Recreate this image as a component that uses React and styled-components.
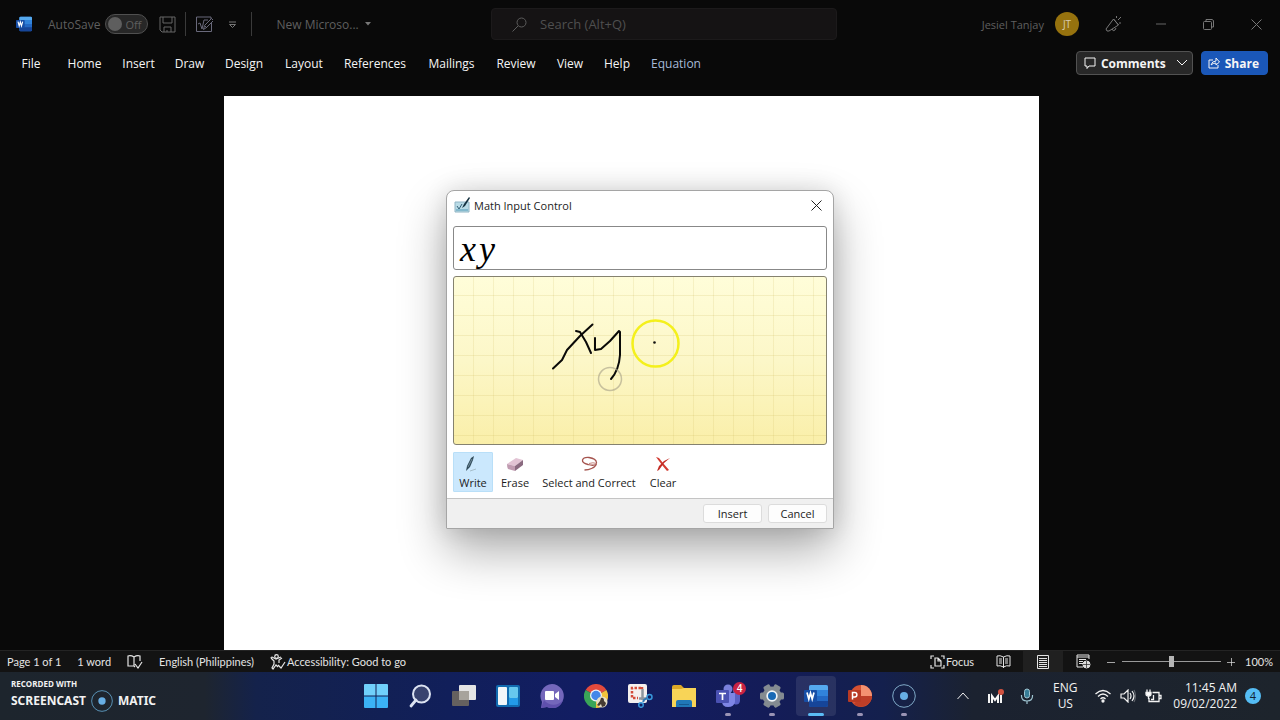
import React from "react";
import styled, { createGlobalStyle } from "styled-components";

const GlobalStyle = createGlobalStyle`
  *, *::before, *::after { box-sizing: border-box; }
  body { margin: 0; background: #090909; }
  body, button, input { font-family: "Open Sans", "Noto Sans", sans-serif; }
  button { margin: 0; padding: 0; border: 0; background: none; color: inherit; cursor: pointer; }
  svg { display: block; flex: none; }
`;

/* ---------- window ---------- */

const Screen = styled.div`
  position: relative;
  display: flex;
  flex-direction: column;
  min-height: 100vh;
  background: #090909;
  overflow: hidden;
`;

const TitleBar = styled.header`
  display: grid;
  grid-template-columns: minmax(0, 491fr) 346px minmax(0, 443fr);
  align-items: center;
  height: 48px;
  color: #5f5f5f;
  font-size: 12px;
`;

const QuickAccess = styled.div`
  display: flex;
  align-items: center;
  padding-left: 16px;
`;

const AutoSave = styled.label`
  display: flex;
  align-items: center;
  gap: 5px;
  margin: 0 10px 0 16px;
`;

const ToggleTrack = styled.span`
  display: flex;
  align-items: center;
  width: 43px;
  height: 20px;
  padding: 0 6px 0 2px;
  border: 1px solid #505050;
  border-radius: 10px;
  background: #272727;
  justify-content: space-between;
  font-size: 11px;
`;

const Toggle = styled.input`
  appearance: none;
  width: 14px;
  height: 14px;
  margin: 0;
  border-radius: 50%;
  background: #5e5e5e;
`;

const Divider = styled.span`
  width: 1px;
  height: 24px;
  margin: 0 ${(p) => p.$gap || 0}px;
  background: #3a3a3a;
`;

const IconButton = styled.button`
  display: flex;
  align-items: center;
  justify-content: center;
  width: ${(p) => p.$width || 18}px;
  height: 24px;
`;

const DocumentTitle = styled.button`
  display: flex;
  align-items: center;
  gap: 6px;
  margin-left: 24px;
  font-size: 12px;
`;

const SearchBox = styled.label`
  display: flex;
  align-items: center;
  gap: 13px;
  height: 32px;
  padding: 0 20px;
  border: 1px solid #1c1a1b;
  border-radius: 4px;
  background: #151314;
`;

const SearchInput = styled.input`
  flex: 1;
  min-width: 0;
  padding: 0;
  border: 0;
  outline: 0;
  background: transparent;
  color: #595959;
  font-size: 13px;
  &::placeholder { color: #4f4f4f; opacity: 1; }
`;

const WindowTools = styled.div`
  display: flex;
  align-items: center;
  justify-content: flex-end;
  font-size: 11px;
`;

const Avatar = styled.span`
  display: flex;
  align-items: center;
  justify-content: center;
  width: 24px;
  height: 24px;
  margin: 0 11px 0 11px;
  border-radius: 50%;
  background: #96720e;
  color: #d8cdb0;
  font-size: 10px;
`;

/* ---------- ribbon ---------- */

const Ribbon = styled.div`
  display: flex;
  align-items: center;
  justify-content: space-between;
  height: 32px;
  padding: 0 12px 2px 10px;
`;

const Tabs = styled.nav`
  display: flex;
`;

const Tab = styled.button`
  width: ${(p) => p.$width}px;
  height: 24px;
  color: ${(p) => (p.$accent ? "#a6bad8" : "#f5f5f5")};
  font-size: 12px;
  white-space: nowrap;
  text-align: center;
`;

const RibbonActions = styled.div`
  display: flex;
  gap: 8px;
`;

const ActionButton = styled.button`
  display: flex;
  align-items: center;
  gap: 5px;
  height: 24px;
  padding: 0 ${(p) => (p.$primary ? 8 : 4)}px 0 ${(p) => (p.$primary ? 6 : 7)}px;
  border: 1px solid ${(p) => (p.$primary ? "#1b58b8" : "#525252")};
  border-radius: 4px;
  background: ${(p) => (p.$primary ? "#1a57b8" : "#282828")};
  color: #f5f5f5;
  font-size: 12px;
  font-weight: 700;
  & > svg:last-child:not(:first-child) { margin-left: 5px; }
`;

/* ---------- document ---------- */

const Workspace = styled.main`
  display: flex;
  flex: 1;
  justify-content: center;
  padding: 16px 17px 0 0;
`;

const Page = styled.section`
  width: 815px;
  background: #fff;
`;

/* ---------- dialog ---------- */

const Dialog = styled.section`
  position: absolute;
  top: 190px;
  left: 50%;
  transform: translateX(-50%);
  width: 388px;
  border: 1px solid #a5a5a5;
  border-radius: 8px 8px 1px 1px;
  background: #fff;
  color: #1c1c1c;
  box-shadow: 0 22px 48px rgba(0, 0, 0, 0.32), 0 0 24px rgba(0, 0, 0, 0.12);
  font-size: 11px;
`;

const DialogHeader = styled.div`
  display: flex;
  align-items: center;
  gap: 3px;
  height: 29px;
  padding: 0 8px 0 7px;
`;

const DialogTitle = styled.h1`
  flex: 1;
  margin: 0;
  font-size: 11px;
  font-weight: 400;
`;

const DialogBody = styled.div`
  display: flex;
  flex-direction: column;
  gap: 6px;
  padding: 6px;
`;

const Preview = styled.output`
  display: flex;
  align-items: center;
  gap: 3px;
  height: 44px;
  padding: 2px 6px 0;
  border: 1px solid #888;
  border-radius: 3px;
  color: #000;
  font-family: "Liberation Serif", serif;
  font-size: 36px;
  font-style: italic;
  line-height: 40px;
`;

const InkArea = styled.div`
  height: 169px;
  border: 1px solid #85826f;
  border-radius: 3px;
  background:
    repeating-linear-gradient(90deg, transparent 0 19px, rgba(205, 185, 95, 0.18) 19px 20px),
    repeating-linear-gradient(180deg, transparent 0 18px, rgba(205, 185, 95, 0.2) 18px 19px, transparent 19px 20px),
    linear-gradient(#fffdd9, #fcf7c8 50%, #faefa9);
`;

const Tools = styled.div`
  display: flex;
  gap: 4px;
  margin-top: 1px;
`;

const Tool = styled.button`
  display: flex;
  flex-direction: column;
  align-items: center;
  gap: 3px;
  width: ${(p) => p.$width}px;
  height: 40px;
  padding-top: 3px;
  border: 1px solid ${(p) => (p.$active ? "#b9dff8" : "transparent")};
  border-radius: 1px;
  background: ${(p) => (p.$active ? "#cbe8fd" : "transparent")};
  font-size: 11px;
  line-height: 16px;
  white-space: nowrap;
`;

const DialogFooter = styled.div`
  display: flex;
  justify-content: flex-end;
  gap: 6px;
  padding: 5px 6px;
  border-top: 1px solid #c4c4c4;
  background: #f0f0f0;
`;

const FooterButton = styled.button`
  width: 59px;
  height: 19px;
  border: 1px solid #dcdcdc;
  border-radius: 3px;
  background: #fdfdfd;
  font-size: 11px;
  line-height: 16px;
`;

/* ---------- status bar ---------- */

const StatusBar = styled.footer`
  display: flex;
  align-items: center;
  justify-content: space-between;
  height: 22px;
  padding: 0 7px;
  border-top: 1px solid #242424;
  background: #131313;
  color: #e4e4e4;
  font-family: "Lato", "Open Sans", sans-serif;
  font-size: 11px;
  line-height: 16px;
  white-space: nowrap;
`;

const StatusGroup = styled.div`
  display: flex;
  align-items: center;
  gap: ${(p) => p.$gap || 0}px;
`;

const StatusButton = styled.button`
  display: flex;
  align-items: center;
  justify-content: center;
  gap: 1px;
  min-width: ${(p) => p.$width || 0}px;
  height: 21px;
  background: ${(p) => (p.$active ? "#202020" : "transparent")};
  font-family: inherit;
  font-size: 11px;
`;

const ZoomSlider = styled.input`
  appearance: none;
  width: 99px;
  height: 12px;
  margin: 0 6px 0 3px;
  background: linear-gradient(#9a9a9a, #9a9a9a) center / 100% 1px no-repeat;
  &::-webkit-slider-thumb {
    appearance: none;
    width: 5px;
    height: 11px;
    background: #b5b5b5;
  }
`;

const ZoomLevel = styled.span`
  min-width: 27px;
  margin-left: 10px;
`;

/* ---------- taskbar ---------- */

const Taskbar = styled.div`
  display: grid;
  grid-template-columns: minmax(0, 1fr) auto minmax(0, 1fr);
  align-items: center;
  height: 48px;
  background: linear-gradient(90deg, #1d252d 0, #1e252f 16%, #14224b 20%, #111f5a 35%, #121d62 45%, #141c58 60%, #14204d 69%, #1b2230 76%, #1d242c 100%);
  color: #f2f2f2;
  white-space: nowrap;
`;

const Watermark = styled.div`
  padding-left: 11px;
  font-weight: 700;
`;

const WatermarkNote = styled.div`
  font-size: 8px;
  line-height: 10px;
`;

const WatermarkBrand = styled.div`
  display: flex;
  align-items: center;
  gap: 5px;
  font-family: "Noto Sans", sans-serif;
  font-size: 12px;
  line-height: 24px;
`;

const Apps = styled.div`
  display: flex;
  gap: 4px;
`;

const AppButton = styled.button`
  position: relative;
  display: flex;
  align-items: center;
  justify-content: center;
  width: 40px;
  height: 40px;
  border-radius: 4px;
  background: ${(p) => (p.$active ? "rgba(255, 255, 255, 0.09)" : "transparent")};
  &::after {
    content: "";
    position: absolute;
    bottom: 0;
    left: 50%;
    width: ${(p) => (p.$active ? 16 : p.$open ? 6 : 0)}px;
    height: 3px;
    margin-left: ${(p) => (p.$active ? -8 : -3)}px;
    border-radius: 2px;
    background: ${(p) => (p.$active ? "#5bbcf5" : "#9a94b5")};
  }
`;

const Count = styled.span`
  position: absolute;
  top: 6px;
  right: 2px;
  width: 13px;
  height: 13px;
  border-radius: 50%;
  background: #c92343;
  color: #fff;
  font-size: 10px;
  font-weight: 600;
  line-height: 13px;
  text-align: center;
`;

const Tray = styled.div`
  display: flex;
  align-items: center;
  justify-content: flex-end;
  padding-right: 19px;
  font-size: 12px;
  line-height: 16px;
`;

const Language = styled.button`
  width: 44px;
  font-size: 12px;
  line-height: 16px;
  text-align: center;
`;

const Clock = styled.time`
  margin: 0 8px 0 4px;
  text-align: right;
`;

const Notices = styled.button`
  width: 16px;
  height: 16px;
  border-radius: 50%;
  background: #55bdf5;
  color: #123;
  font-size: 11px;
  line-height: 16px;
`;

/* ---------- drawings ---------- */

const Svg = ({ w = 16, h = w, box, children, ...rest }) => (
  <svg width={w} height={h} viewBox={box || `0 0 ${w} ${h}`} fill="none" stroke="currentColor" aria-hidden="true" {...rest}>
    {children}
  </svg>
);

const WordLogo = ({ size = 24 }) => (
  <Svg w={size} box="0 0 24 24" stroke="none">
    <rect x="5" y="1" width="19" height="22" rx="2" fill="#2368c4" />
    <path d="M5 6V3q0-2 2-2h15q2 0 2 2v3z" fill="#55a9ee" />
    <path d="M5 6h19v6H5z" fill="#3183db" />
    <path d="M5 17h19v4q0 2-2 2H7q-2 0-2-2z" fill="#164599" />
    <rect x="0" y="6" width="13" height="12" rx="1" fill="#174ea6" />
    <path d="M3 8.5 4.8 15 6.5 9 8.2 15 10 8.5" stroke="#fff" strokeWidth="1.7" />
  </Svg>
);

const SaveIcon = () => (
  <Svg w={17} stroke="#666">
    <path d="M1 1h15v15H3l-2-2zM4 1v6h9V1M5 16v-5h7v5M8 14v2" />
  </Svg>
);

const EquationIcon = () => (
  <Svg w={18} stroke="#69697b">
    <path d="M16.500 7v9.500H1.500V2H16v2M3 9l2-1 2 6 2-9h4" />
    <path d="m8.500 14.500 1-4 7-7 2 2-7 7zM10 11l2 2" />
  </Svg>
);

const CustomizeIcon = () => (
  <Svg w={9} stroke="#777"><path d="M1 2h7M1.500 4.500h6l-3 3z" /></Svg>
);

const SearchIcon = () => (
  <Svg w={15} stroke="#5c5c5c"><circle cx="9.500" cy="5.500" r="4.500" /><path d="m6 9-5.500 5.500" /></Svg>
);

const PenSparkIcon = () => (
  <Svg w={18} stroke="#777">
    <path d="m2 16-1-2L8.500 4l5 6L4 16zM7 14q1 3 3 1l1-2" />
    <path d="M11.500 3V1M13 5l3-3M14 8h2M8.500 4l5 6" />
  </Svg>
);

const CloseIcon = ({ color = "#777", size = 11 }) => (
  <Svg w={size} box="0 0 11 11" stroke={color}><path d="m.5.5 10 10m0-10-10 10" /></Svg>
);

const MathPadIcon = () => (
  <Svg w={17} stroke="none">
    <path d="M1 5h14v10H1z" fill="#b9dbe6" stroke="#8fb4c4" />
    <path d="M2 12h12v2H2z" fill="#83b9cd" />
    <path d="m3 9 2 3 3-5" stroke="#315e75" />
    <path d="m8 11 2-4 5-7 1 1-5 8z" fill="#14313f" />
  </Svg>
);

const WriteIcon = () => (
  <Svg w={16} stroke="none">
    <path d="m5 15 6-2" stroke="#a5bdca" />
    <path d="m1 15 1-5 4-8 3-2-1 4-3 7z" fill="#314b5a" />
    <path d="m3 11 4-8" stroke="#8faab9" strokeWidth=".7" />
  </Svg>
);

const EraseIcon = () => (
  <Svg w={18} h={16} stroke="none">
    <path d="m1 8 9-6 7 2-8 6z" fill="#e2c3d4" />
    <path d="m1 8 8 2v5l-7-2q-1-2-1-5" fill="#c09bb1" />
    <path d="m9 10 8-6v5l-8 6z" fill="#8a6a80" />
  </Svg>
);

const LassoIcon = () => (
  <Svg w={17} h={16} stroke="#a5544e" strokeWidth="1.300">
    <path d="M15 8.500Q12 10 7 8.500 1 7 1.500 4 2.500 1 8 1.500q7 1 7.500 5 0 4-5 6-3 1.500-7 1.500" />
    <path d="M8 7.500q4-1.500 7.500 0" stroke="#c58780" strokeWidth="1" />
  </Svg>
);

const ClearIcon = () => (
  <Svg w={16} stroke="none">
    <path d="m1 1 3 1 4 5 6 7-2 1-5-6-3-4z" fill="#d23b31" />
    <path d="M15 2 9 7l-5 7-2 1 2-5 5-5z" fill="#c32c25" />
  </Svg>
);

const Ink = () => (
  <Svg w="100%" h="100%" box="0 0 372 167" preserveAspectRatio="xMinYMin meet" strokeLinecap="round" strokeLinejoin="round">
    <g transform="translate(76 23)">
      <g stroke="#0a0a08" strokeWidth="2">
        <path d="M62.500 24.500 50 36 37 50 32 60 23 68.500" />
        <path d="m46 31 4 1 6 10 5 11" />
        <path d="M65 38v12l6-1 9-8 9-10 1 1v23q-1 15-9 24" />
      </g>
      <circle cx="125.500" cy="43.500" r="23" stroke="#f4f01c" strokeWidth="2.500" />
      <circle cx="124.500" cy="42.500" r="1.300" fill="#111" stroke="none" />
      <circle cx="80" cy="79" r="11.500" stroke="#aaa58b" strokeOpacity=".65" strokeWidth="1.500" />
    </g>
  </Svg>
);

const ProofIcon = () => (
  <Svg w={16} h={14} strokeWidth="1.200"><path d="M7 2v9M7 2q-3-2-6-1v10h6l1 1M7 2q3-2 6-1v5M8 9l3 4 4-6" /></Svg>
);

const AccessIcon = () => (
  <Svg w={16} h={16} strokeWidth="1.200"><circle cx="6.500" cy="2.500" r="1.800" /><path d="m1 4 3 3v3l-2 4 1 1 3-4 2 2M12 4 9 6v3M1 4q0-1 1-1l4 2 5-2M8 11l3 3 4-6" /></Svg>
);

const FocusIcon = () => (
  <Svg w={15} h={14}><path d="M4 1H1v3M1 10v3h3M11 1h3v3M14 10v3h-3M5 3h3l3 3v5H5zM8 3v3h3" strokeWidth="1.200" /></Svg>
);

const ReadIcon = () => (
  <Svg w={15} h={14}><path d="M7.500 2v11M7.500 2Q4 0 1 1v10q3-1 6.500 1 3-2 6.500-1V1q-3-1-6.500 1M3 4h3M3 6h3M3 8h3M9 4h3M9 6h3M9 8h3" /></Svg>
);

const PrintIcon = () => (
  <Svg w={12} h={14}><path d="M.5.5h11v13H.5zM2 3.500h8M2 5.500h8M2 7.500h8M2 9.500h8M2 11.500h8" /></Svg>
);

const WebIcon = () => (
  <Svg w={15} h={15}><path d="M13 5V1H1v12h6M1 3h12M3 5.500h7M3 7.500h4M3 9.500h4" /><circle cx="10.500" cy="10.500" r="3.500" fill="#ddd" /><path d="M7 10.500h7M10.500 7v7" stroke="#222" strokeWidth=".7" /></Svg>
);

const RecorderIcon = ({ size = 24, color = "#7fa9c7" }) => (
  <Svg w={size} box="0 0 24 24"><circle cx="12" cy="12" r="11.300" stroke={color} /><circle cx="12" cy="12" r="4" fill="#67aee4" stroke="none" /></Svg>
);

const StartIcon = () => (
  <Svg w={24} stroke="none"><path d="M0 1q0-1 1-1h10.500v11.500H0zM12.500 0H23q1 0 1 1v10.500H12.500z" fill="#70d0fb" /><path d="M0 12.500h11.500V24H1q-1 0-1-1zM12.500 12.500H24V23q0 1-1 1H12.500z" fill="#3bb2f5" /></Svg>
);

const FindIcon = () => (
  <Svg w={24} stroke="#dce3f2"><circle cx="13.500" cy="10" r="8.500" fill="#38436f" strokeWidth="2" /><path d="m8 16-5 6" strokeWidth="2.800" strokeLinecap="round" /></Svg>
);

const TasksIcon = () => (
  <Svg w={24} stroke="none"><rect x="7" y="1" width="17" height="15" rx="1" fill="#e4e4e4" /><rect x="0" y="7" width="17" height="15" rx="1" fill="#65615f" /><path d="M7 7h10v9H7z" fill="#a7a39c" /></Svg>
);

const WidgetsIcon = () => (
  <Svg w={24} stroke="none"><rect y="1" width="24" height="22" rx="2" fill="#116bb0" /><rect x="2" y="3" width="9" height="18" rx="1" fill="#f2f6f9" /><rect x="13" y="3" width="9" height="11" rx="1" fill="#67c8ee" /><path d="M13 14h9v7h-9z" fill="#239be8" /></Svg>
);

const ChatIcon = () => (
  <Svg w={24} stroke="none"><path d="M12 0a12 12 0 1 1-5 23L1 24l1-6A12 12 0 0 1 12 0" fill="#7467bb" /><path d="M4 16a12 12 0 0 0 19 0 11 11 0 0 1-16 7l-6 1z" fill="#5f50ad" /><rect x="5" y="7" width="9" height="9" rx="1" fill="#fff" /><path d="m15 10 4-3v9l-4-3z" fill="#fff" /></Svg>
);

const ChromeIcon = () => (
  <Svg w={24} stroke="none"><path d="M12 12 1.600 6a12 12 0 0 1 20.800 0z" fill="#e34a3c" /><path d="M12 12 22.400 6A12 12 0 0 1 12 24l-2-1z" fill="#f1c33b" /><path d="M12 12v12A12 12 0 0 1 1.600 6z" fill="#3aa558" /><circle cx="12" cy="11.500" r="6" fill="#eef2f8" /><circle cx="12" cy="11.500" r="4.700" fill="#4387e9" /><circle cx="18" cy="18" r="5.500" fill="#e6dfc5" /><path d="M17 14q3-1 3 3l2 2-1 3-3 1-1-3-2 2-2-1 3-4z" fill="#453b32" /></Svg>
);

const SnipIcon = () => (
  <Svg w={25} h={24} stroke="none"><rect x="0" y="0" width="19" height="19" rx="2" fill="#f4f0ee" /><path d="M13 4H4v10h6M14 3v2" stroke="#d34b39" strokeWidth="2.500" strokeDasharray="2.500 1.500" /><path d="M14.500 5v11M11 14.500h8" stroke="#8e969e" strokeWidth="2.500" /><circle cx="13" cy="21" r="2.300" stroke="#3798db" strokeWidth="1.500" /><circle cx="21.500" cy="13" r="2.500" stroke="#3798db" strokeWidth="1.500" /><path d="m15 18 1-2 3-2" stroke="#3178b5" strokeWidth="2" /></Svg>
);

const FolderIcon = () => (
  <Svg w={24} stroke="none"><path d="M0 3q0-2 2-2h7l3 3h10q2 0 2 2v17H0z" fill="#dda927" /><path d="M0 5h9l3-1h12v19H0z" fill="#f8d457" /><path d="M4 23v-5q0-2 2-2h12q2 0 2 2v5z" fill="#2077b8" /><path d="M7 20h10v1H7z" fill="#155890" /></Svg>
);

const TeamsIcon = () => (
  <Svg w={24} stroke="none"><circle cx="12" cy="5" r="4.500" fill="#7a80dc" /><circle cx="20" cy="7" r="3" fill="#5960be" /><path d="M16 9h8v8q-1 5-6 3z" fill="#5960c4" /><path d="M7 9h12v9q-1 5-7 5t-6-6z" fill="#7e85e5" /><rect y="6" width="13" height="13" rx="1" fill="#4a51b2" /><path d="M3 9.500h7M6.500 9.500V16" stroke="#fff" strokeWidth="1.700" /></Svg>
);

const GearIcon = () => (
  <Svg w={24} stroke="none">
    <g fill="#848b91">
      {[30, 90, 150].map((a) => <rect key={a} x="8.500" y="0" width="7" height="24" rx="1.500" transform={`rotate(${a} 12 12)`} />)}
      <circle cx="12" cy="12" r="9.500" />
    </g>
    <circle cx="12" cy="12" r="5.700" fill="#f1f5f8" /><circle cx="12" cy="12" r="4" fill="#1969b5" />
  </Svg>
);

const PowerPointIcon = () => (
  <Svg w={24} stroke="none"><circle cx="13" cy="12" r="11" fill="#d65132" /><path d="M13 1a11 11 0 0 1 11 11H13z" fill="#f49170" /><path d="M13 12h11a11 11 0 0 1-18 8z" fill="#be3e27" /><rect y="6" width="13" height="12" rx="1" fill="#b93a24" /><path d="M4.500 15.500v-7h2.200a2.200 2.200 0 0 1 0 4.400H4.500" stroke="#fff" strokeWidth="1.500" /></Svg>
);

const MixerIcon = () => (
  <Svg w={17} stroke="none"><path d="M2 6v9M5 15V8l3 4 3-4v7M14 7v8" stroke="#f4f4f4" strokeWidth="2" /><circle cx="14" cy="4" r="3" fill="#d15240" /></Svg>
);

const MicIcon = () => (
  <Svg w={14} h={17} stroke="#9fc5d2"><rect x="4.500" y="1" width="5" height="9" rx="2.500" fill="#377e98" /><path d="M1.500 7v1q0 5 5.500 5t5.500-5V7M7 13v3" strokeWidth="1.200" /></Svg>
);

const WifiIcon = () => (
  <Svg w={16} h={14} strokeWidth="1.300"><path d="M.5 5Q8-2 15.500 5M3 7.500q5-5 10 0M5.500 10q2.500-2.500 5 0" /><circle cx="8" cy="12" r="1" fill="#fff" /></Svg>
);

const VolumeIcon = () => (
  <Svg w={16} h={14} strokeWidth="1.200"><path d="M1 5h3l4-4v12L4 9H1zM10 4q2 3 0 6" /><path d="M12 2q4 5 0 10" /><path d="M14 1q3 6 0 12" opacity=".3" /></Svg>
);

const BatteryIcon = () => (
  <Svg w={17} h={14} strokeWidth="1.300"><path d="M7.500 3.500h6.500v9H4V9M14 6.500h2v3h-2" /><path d="M1 3.500h5v1.500q0 2-2.500 2T1 5z" fill="#fff" /><path d="M2 3V.5M5 3V.5M3.500 7v3M8.500 6v4.500H6" /></Svg>
);

/* ---------- content ---------- */

const tabs = [
  ["File", 42], ["Home", 65], ["Insert", 43], ["Draw", 59], ["Design", 50], ["Layout", 70],
  ["References", 72], ["Mailings", 81], ["Review", 48], ["View", 60], ["Help", 34], ["Equation", 84],
];

const tools = [
  ["Write", 40, WriteIcon], ["Erase", 36, EraseIcon], ["Select and Correct", 104, LassoIcon], ["Clear", 36, ClearIcon],
];

const apps = [
  { name: "Start", icon: <StartIcon /> },
  { name: "Search", icon: <FindIcon /> },
  { name: "Task view", icon: <TasksIcon /> },
  { name: "Widgets", icon: <WidgetsIcon /> },
  { name: "Chat", icon: <ChatIcon /> },
  { name: "Chrome", icon: <ChromeIcon /> },
  { name: "Snip", icon: <SnipIcon /> },
  { name: "Files", icon: <FolderIcon /> },
  { name: "Teams", icon: <TeamsIcon />, open: true, count: 4 },
  { name: "Settings", icon: <GearIcon />, open: true },
  { name: "Word", icon: <WordLogo />, active: true },
  { name: "PowerPoint", icon: <PowerPointIcon />, open: true },
  { name: "Recorder", icon: <RecorderIcon />, open: true },
];

export default function App() {
  return (
    <>
      <GlobalStyle />
      <Screen>
        <TitleBar>
          <QuickAccess>
            <WordLogo size={16} />
            <AutoSave>
              AutoSave
              <ToggleTrack><Toggle type="checkbox" />Off</ToggleTrack>
            </AutoSave>
            <IconButton aria-label="Save"><SaveIcon /></IconButton>
            <Divider $gap={9} />
            <IconButton aria-label="Ink equation"><EquationIcon /></IconButton>
            <IconButton $width={38} aria-label="Customize"><CustomizeIcon /></IconButton>
            <Divider />
            <DocumentTitle>
              New Microso...
              <Svg w={6} h={4} stroke="none"><path d="M0 0h6L3 3.500z" fill="#777" /></Svg>
            </DocumentTitle>
          </QuickAccess>
          <SearchBox>
            <SearchIcon />
            <SearchInput type="search" aria-label="Search" placeholder="Search (Alt+Q)" />
          </SearchBox>
          <WindowTools>
            Jesiel Tanjay
            <Avatar>JT</Avatar>
            <IconButton $width={48} aria-label="Ink"><PenSparkIcon /></IconButton>
            <IconButton $width={46} aria-label="Minimize"><Svg w={10} h={2} stroke="#666"><path d="M0 1h10" /></Svg></IconButton>
            <IconButton $width={48} aria-label="Restore">
              <Svg w={11} stroke="#777"><rect x=".5" y="2.500" width="8" height="8" rx="1" /><path d="M3 2V.5h6l1.500 1V8H9" /></Svg>
            </IconButton>
            <IconButton $width={48} aria-label="Close"><CloseIcon /></IconButton>
          </WindowTools>
        </TitleBar>

        <Ribbon>
          <Tabs>
            {tabs.map(([name, width]) => (
              <Tab key={name} $width={width} $accent={name === "Equation"}>{name}</Tab>
            ))}
          </Tabs>
          <RibbonActions>
            <ActionButton>
              <Svg w={12}><path d="M1 1h10v8H5l-2 2.500V9H1z" /></Svg>
              Comments
              <Svg w={12} h={8}><path d="m1 1 5 5 5-5" /></Svg>
            </ActionButton>
            <ActionButton $primary>
              <Svg w={12}><path d="M5 3H1v8h9V8M3 8q1-4 5-4V1l3.500 4L8 8V6Q5 6 3 8" /></Svg>
              Share
            </ActionButton>
          </RibbonActions>
        </Ribbon>

        <Workspace><Page aria-label="Document page" /></Workspace>

        <StatusBar>
          <StatusGroup $gap={16}>
            <span>Page 1 of 1</span>
            <span>1 word</span>
            <StatusButton aria-label="Proofing"><ProofIcon /></StatusButton>
            <span>English (Philippines)</span>
            <StatusButton><AccessIcon />Accessibility: Good to go</StatusButton>
          </StatusGroup>
          <StatusGroup>
            <StatusButton $width={62}><FocusIcon />Focus</StatusButton>
            <StatusButton $width={40} aria-label="Read mode"><ReadIcon /></StatusButton>
            <StatusButton $width={40} $active aria-label="Print layout"><PrintIcon /></StatusButton>
            <StatusButton $width={40} aria-label="Web layout"><WebIcon /></StatusButton>
            <StatusButton $width={16} aria-label="Zoom out"><Svg w={8}><path d="M0 4.500h8" opacity=".7" /></Svg></StatusButton>
            <ZoomSlider type="range" min="0" max="100" defaultValue="50" aria-label="Zoom" />
            <StatusButton aria-label="Zoom in"><Svg w={8}><path d="M0 4.500h8M4.500 0v8" opacity=".7" /></Svg></StatusButton>
            <ZoomLevel>100%</ZoomLevel>
          </StatusGroup>
        </StatusBar>

        <Taskbar>
          <Watermark>
            <WatermarkNote>RECORDED WITH</WatermarkNote>
            <WatermarkBrand>SCREENCAST<RecorderIcon size={22} color="#5d9ac0" />MATIC</WatermarkBrand>
          </Watermark>
          <Apps>
            {apps.map((app) => (
              <AppButton key={app.name} aria-label={app.name} $active={app.active} $open={app.open}>
                {app.icon}
                {app.count && <Count>{app.count}</Count>}
              </AppButton>
            ))}
          </Apps>
          <Tray>
            <IconButton $width={32} aria-label="Hidden icons"><Svg w={12} h={8}><path d="m.5 7 5.500-6 5.500 6" /></Svg></IconButton>
            <IconButton $width={32} aria-label="Mixer"><MixerIcon /></IconButton>
            <IconButton $width={32} aria-label="Microphone"><MicIcon /></IconButton>
            <Language>ENG<br />US</Language>
            <IconButton $width={32} aria-label="Network"><WifiIcon /></IconButton>
            <IconButton aria-label="Volume"><VolumeIcon /></IconButton>
            <IconButton $width={32} aria-label="Battery"><BatteryIcon /></IconButton>
            <Clock>11:45 AM<br />09/02/2022</Clock>
            <Notices>4</Notices>
          </Tray>
        </Taskbar>

        <Dialog role="dialog" aria-labelledby="math-title">
          <DialogHeader>
            <MathPadIcon />
            <DialogTitle id="math-title">Math Input Control</DialogTitle>
            <IconButton aria-label="Close dialog"><CloseIcon color="#222" /></IconButton>
          </DialogHeader>
          <DialogBody>
            <Preview><span>x</span><span>y</span></Preview>
            <InkArea><Ink /></InkArea>
            <Tools>
              {tools.map(([name, width, Icon], i) => (
                <Tool key={name} $width={width} $active={i === 0}><Icon />{name}</Tool>
              ))}
            </Tools>
          </DialogBody>
          <DialogFooter>
            <FooterButton>Insert</FooterButton>
            <FooterButton>Cancel</FooterButton>
          </DialogFooter>
        </Dialog>
      </Screen>
    </>
  );
}
